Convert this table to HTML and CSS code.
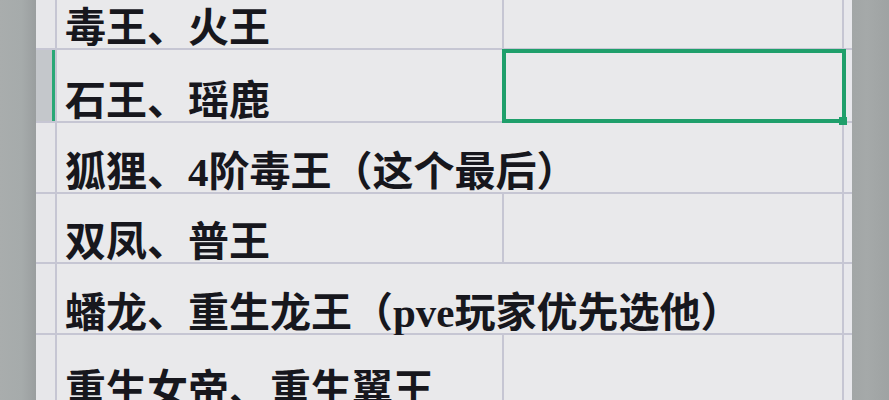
FILE: index.html
```html
<!DOCTYPE html>
<html lang="zh-CN">
<head>
<meta charset="utf-8">
<title>Sheet</title>
<link rel="stylesheet" href="styles.css">
</head>
<body>
<div class="screen">
  <div class="side side-left"></div>
  <div class="sheet">
    <div class="rh"></div><div class="cell a">毒王、火王</div><div class="cell b"></div><div class="edge"></div>
    <div class="rh rh-active"></div><div class="cell a">石王、瑶鹿</div><div class="cell b selected"><span class="handle"></span></div><div class="edge"></div>
    <div class="rh"></div><div class="cell a wide">狐狸、4阶毒王（这个最后）</div><div class="edge"></div>
    <div class="rh"></div><div class="cell a">双凤、普王</div><div class="cell b"></div><div class="edge"></div>
    <div class="rh"></div><div class="cell a wide">蟠龙、重生龙王（pve玩家优先选他）</div><div class="edge"></div>
    <div class="rh"></div><div class="cell a last">重生女帝、重生翼王</div><div class="cell b"></div><div class="edge"></div>
  </div>
  <div class="side side-right"></div>
</div>
</body>
</html>
```
FILE: styles.css
```css
* { box-sizing: border-box; }
html, body { margin: 0; padding: 0; }
body { width: 889px; height: 400px; overflow: hidden; background: #a6aaaa; }

.screen {
  display: flex;
  width: 889px;
  height: 400px;
  overflow: hidden;
}

.side { flex: none; height: 400px; }
.side-left {
  width: 36px;
  background: linear-gradient(to right, #a9adad 0%, #a6abab 60%, #9a9e9f 100%);
}
.side-right {
  width: 37px;
  background: linear-gradient(to right, #a2a6a6 0%, #a5a9a9 40%, #9fa3a3 100%);
}

.sheet {
  flex: none;
  width: 816px;
  height: 400px;
  overflow: hidden;
  display: grid;
  grid-template-columns: 19px 445px 338px 8px;
  grid-template-rows: 48px 71px 69px 68px 69px 90px;
  column-gap: 2px;
  row-gap: 2px;
  background: #c6c6d3;
  font-family: "Liberation Serif", "Noto Sans CJK SC", serif;
  font-weight: 700;
  color: #17171d;
}

.rh { background: #e7e7ea; }
.rh-active {
  background: #c4c7cb;
  border-right: 3px solid #2aa876;
}
.edge { background: #e8e8ec; }

.cell {
  background: #e9e9eb;
  display: flex;
  align-items: flex-end;
}
.a {
  padding-left: 8px;
  font-size: 41px;
  line-height: 39px;
  white-space: nowrap;
}
.a.wide { grid-column: span 2; }
.a.last { align-items: flex-start; padding-top: 36px; }

.selected { position: relative; }
.selected::after {
  content: "";
  position: absolute;
  left: -2px;
  top: -1px;
  right: -4px;
  bottom: -2px;
  border: 4px solid #1f9f6b;
}
.handle {
  position: absolute;
  right: -5px;
  bottom: -4px;
  width: 8px;
  height: 8px;
  background: #1f9f6b;
  z-index: 2;
}
```
